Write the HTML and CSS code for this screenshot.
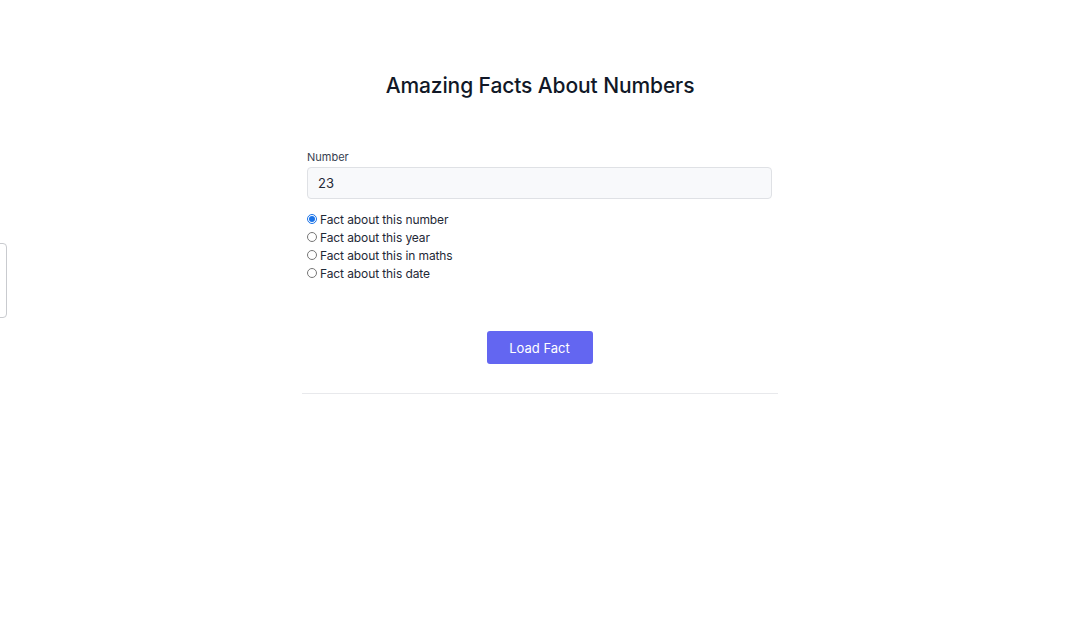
FILE: index.html
```html
<!DOCTYPE html>
<html lang="en">
<head>
<meta charset="utf-8">
<title>Amazing Facts About Numbers</title>
<link rel="stylesheet" href="styles.css">
</head>
<body>
<div class="side-tab"></div>
<main class="container">
  <h1 class="title">Amazing Facts About Numbers</h1>
  <form class="form">
    <label class="label" for="num">Number</label>
    <input class="input" id="num" type="text" value="23">
    <div class="options">
      <label class="option"><input type="radio" name="type" checked><span>Fact about this number</span></label>
      <label class="option"><input type="radio" name="type"><span>Fact about this year</span></label>
      <label class="option"><input type="radio" name="type"><span>Fact about this in maths</span></label>
      <label class="option"><input type="radio" name="type"><span>Fact about this date</span></label>
    </div>
    <div class="actions">
      <button type="button" class="btn">Load Fact</button>
    </div>
  </form>
  <hr class="divider">
</main>
</body>
</html>
```
FILE: styles.css
```css
* { box-sizing: border-box; }
html, body { margin: 0; padding: 0; background: #fff; }
body {
  font-family: Inter, "Noto Sans", "Liberation Sans", sans-serif;
  color: #1f2937;
  width: 1080px;
  height: 618px;
  overflow: hidden;
  position: relative;
}
.side-tab {
  position: absolute;
  left: -100px;
  top: 243px;
  width: 107px;
  height: 75px;
  border: 1px solid #c9cbcf;
  border-radius: 4px;
  background: #fff;
}
.container {
  width: 476px;
  margin: 0 auto;
  padding-top: 72px;
}
.title {
  margin: 0;
  text-align: center;
  font-size: 21px;
  font-weight: 500;
  line-height: 28px;
  color: #111827;
  letter-spacing: -0.1px;
}
.form {
  padding: 0 6px 0 5px;
  margin-top: 50px;
  display: flex;
  flex-direction: column;
}
.label {
  font-size: 11px;
  line-height: 14px;
  color: #374151;
  margin-bottom: 3px;
}
.input {
  height: 32px;
  width: 100%;
  border: 1px solid #dfe1e5;
  border-radius: 4px;
  background: #f8f9fb;
  padding: 0 10px;
  font-family: inherit;
  font-size: 13px;
  color: #1f2937;
  outline: none;
}
.options {
  margin-top: 11px;
  display: flex;
  flex-direction: column;
}
.option {
  display: flex;
  align-items: center;
  height: 18px;
  font-size: 12px;
  letter-spacing: -0.1px;
  color: #1f2937;
}
.option input {
  width: 10px;
  height: 10px;
  margin: 0 3px 0 0;
  accent-color: #1a73e8;
}
.actions {
  display: flex;
  justify-content: center;
  margin-top: 49px;
}
.btn {
  width: 106px;
  height: 33px;
  border: none;
  border-radius: 3px;
  background: #6366f1;
  color: #fff;
  font-family: inherit;
  font-size: 13px;
  cursor: pointer;
}
.divider {
  margin: 29px 0 0;
  border: none;
  border-top: 1px solid #e8e9ec;
  height: 0;
}
```
